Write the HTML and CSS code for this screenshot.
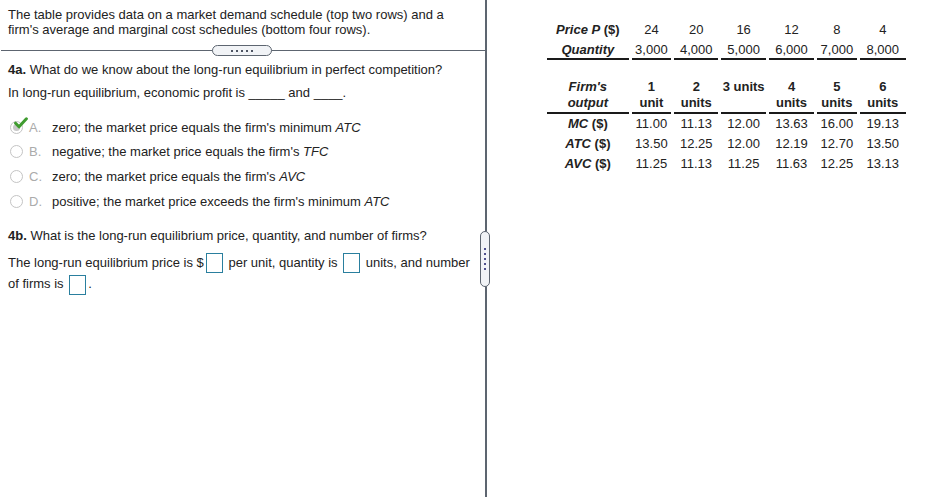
FILE: index.html
```html
<!DOCTYPE html>
<html>
<head>
<meta charset="utf-8">
<link rel="stylesheet" href="styles.css">
</head>
<body>
<div class="page">
  <div class="left">
    <p class="intro">The table provides data on a market demand schedule (top two rows) and a firm's average and marginal cost schedules (bottom four rows).</p>
    <div class="hdivider"><span class="hhandle"><i></i><i></i><i></i><i></i><i></i></span></div>
    <div class="content">
      <p class="q"><b>4a.</b> What do we know about the long-run equilibrium in perfect competition?</p>
      <p class="stem">In long-run equilibrium, economic profit is _____ and ____.</p>
      <ul class="options">
        <li class="opt selected">
          <span class="radio"><span class="dot"></span></span>
          <svg class="check" width="14" height="12" viewBox="0 0 14 12"><path d="M1.6 6.2 L5 9.8 L12.4 1.8" fill="none" stroke="#3f9b2f" stroke-width="3" stroke-linecap="round" stroke-linejoin="round"/></svg>
          <span class="letter">A.</span>
          <span class="otext">zero; the market price equals the firm's minimum <i>ATC</i></span>
        </li>
        <li class="opt">
          <span class="radio"></span>
          <span class="letter">B.</span>
          <span class="otext">negative; the market price equals the firm's <i>TFC</i></span>
        </li>
        <li class="opt">
          <span class="radio"></span>
          <span class="letter">C.</span>
          <span class="otext">zero; the market price equals the firm's <i>AVC</i></span>
        </li>
        <li class="opt">
          <span class="radio"></span>
          <span class="letter">D.</span>
          <span class="otext">positive; the market price exceeds the firm's minimum <i>ATC</i></span>
        </li>
      </ul>
      <p class="q q2"><b>4b.</b> What is the long-run equilibrium price, quantity, and number of firms?</p>
      <p class="fill">The long-run equilibrium price is $<span class="box"></span> per unit, quantity is <span class="box"></span> units, and number of firms is <span class="box"></span>.</p>
    </div>
  </div>
  <div class="vsplit"><span class="vhandle"><i></i><i></i><i></i><i></i><i></i></span></div>
  <div class="right">
    <table class="tbl">
      <colgroup><col class="c0"><col class="c1"><col class="c2"><col class="c3"><col class="c4"><col class="c5"><col class="c6"></colgroup>
      <tr><th><i>Price P</i> ($)</th><td>24</td><td>20</td><td>16</td><td>12</td><td>8</td><td>4</td></tr>
      <tr class="ruled"><th><i>Quantity</i></th><td>3,000</td><td>4,000</td><td>5,000</td><td>6,000</td><td>7,000</td><td>8,000</td></tr>
    </table>
    <table class="tbl tbl2">
      <colgroup><col class="c0"><col class="c1"><col class="c2"><col class="c3"><col class="c4"><col class="c5"><col class="c6"></colgroup>
      <tr class="ruled head"><th><i>Firm's<br>output</i></th><th>1<br>unit</th><th>2<br>units</th><th>3 units</th><th>4<br>units</th><th>5<br>units</th><th>6<br>units</th></tr>
      <tr><th><i>MC</i> ($)</th><td>11.00</td><td>11.13</td><td>12.00</td><td>13.63</td><td>16.00</td><td>19.13</td></tr>
      <tr><th><i>ATC</i> ($)</th><td>13.50</td><td>12.25</td><td>12.00</td><td>12.19</td><td>12.70</td><td>13.50</td></tr>
      <tr><th><i>AVC</i> ($)</th><td>11.25</td><td>11.13</td><td>11.25</td><td>11.63</td><td>12.25</td><td>13.13</td></tr>
    </table>
  </div>
</div>
</body>
</html>
```

FILE: styles.css
```css
html, body {
  margin: 0;
  padding: 0;
  background: #fff;
}
body {
  font-family: "Liberation Sans", Arial, sans-serif;
  font-size: 13px;
  color: #222;
  width: 952px;
  height: 497px;
  overflow: hidden;
}
.page {
  display: flex;
  height: 497px;
}
.left {
  width: 485px;
  flex: none;
}
.intro {
  margin: 0;
  padding: 7px 14px 0 8px;
  line-height: 15px;
}
.hdivider {
  position: relative;
  margin-top: 13px;
  margin-left: 1px;
  height: 1px;
  background: #5d6570;
}
.hhandle {
  position: absolute;
  left: 211px;
  top: -5px;
  width: 58px;
  height: 9px;
  border: 1px solid #5d6570;
  border-radius: 6px;
  background: #f1f3f6;
  display: flex;
  justify-content: center;
  align-items: center;
  gap: 3px;
}
.hhandle i {
  width: 2px;
  height: 2px;
  background: #4e5563;
}
.content {
  padding: 0 14px 0 8px;
}
.q {
  margin: 11px 0 0;
  line-height: 15px;
}
.stem {
  margin: 8px 0 0;
  line-height: 15px;
}
.options {
  list-style: none;
  margin: 15px 0 0;
  padding: 0;
}
.opt {
  position: relative;
  display: flex;
  align-items: center;
  height: 24.67px;
}
.radio {
  box-sizing: border-box;
  width: 13px;
  height: 13px;
  border: 1px solid #c4c4c4;
  border-radius: 50%;
  margin-left: 2px;
  display: flex;
  align-items: center;
  justify-content: center;
  background: #fff;
}
.radio .dot {
  width: 7px;
  height: 7px;
  border-radius: 50%;
  background: #c8c8c8;
}
.check {
  position: absolute;
  left: 6px;
  top: 2px;
}
.letter {
  color: #ababab;
  margin-left: 6px;
  width: 23px;
}
.q2 {
  margin-top: 14px;
}
.fill {
  margin: 9px 0 0;
  line-height: 21px;
}
.box {
  display: inline-block;
  box-sizing: border-box;
  width: 17px;
  height: 20px;
  border: 1px solid #2a7f9e;
  vertical-align: middle;
  margin: 0 2px;
}
.vsplit {
  position: relative;
  width: 2px;
  flex: none;
  background: #5d6570;
  height: 497px;
}
.vhandle {
  position: absolute;
  left: -5px;
  top: 231px;
  width: 8px;
  height: 54px;
  border: 1px solid #5d6570;
  border-radius: 6px;
  background: #f1f3f6;
  display: flex;
  flex-direction: column;
  justify-content: center;
  align-items: center;
  gap: 3px;
}
.vhandle i {
  width: 2px;
  height: 2px;
  background: #4d4f8c;
}
.right {
  padding: 20px 0 0 57px;
}
.tbl {
  border-collapse: separate;
  border-spacing: 3px 0;
  table-layout: fixed;
  width: 365px;
}
.c0 { width: 81px; }
.c1 { width: 39px; }
.c2 { width: 44px; }
.c3 { width: 44px; }
.c4 { width: 45px; }
.c5 { width: 39px; }
.c6 { width: 46px; }
.tbl th, .tbl td {
  padding: 2px 0;
  line-height: 16px;
  text-align: center;
  white-space: nowrap;
  vertical-align: top;
}
.tbl th {
  font-weight: bold;
}
.tbl tr.ruled th, .tbl tr.ruled td {
  border-bottom: 2px solid #1a1a1a;
  padding-bottom: 0;
}
.tbl2 {
  margin-top: 19px;
}
.tbl2 tr.head th {
  padding-top: 0;
  padding-bottom: 1px;
}
```
